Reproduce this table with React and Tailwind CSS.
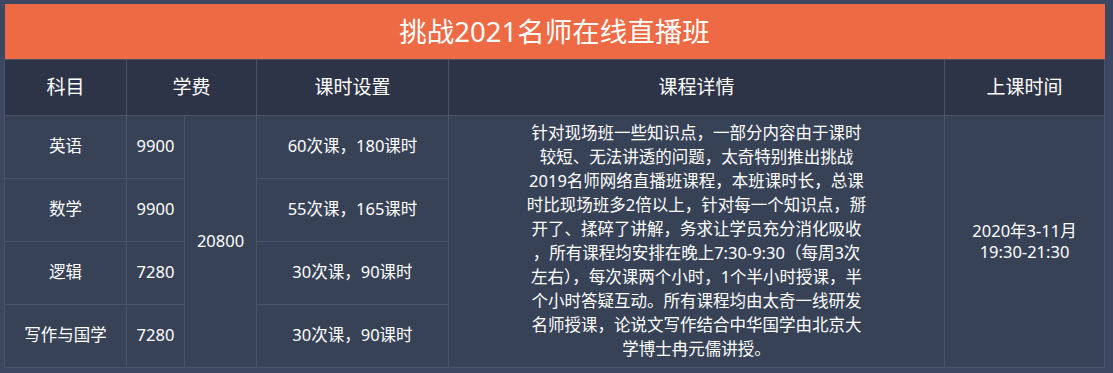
export default function App() {
  const rows = [
    { s: "英语", p: "9900", h: "60次课，180课时" },
    { s: "数学", p: "9900", h: "55次课，165课时" },
    { s: "逻辑", p: "7280", h: "30次课，90课时" },
    { s: "写作与国学", p: "7280", h: "30次课，90课时" },
  ];
  const lines = [
    "针对现场班一些知识点，一部分内容由于课时",
    "较短、无法讲透的问题，太奇特别推出挑战",
    "2019名师网络直播班课程，本班课时长，总课",
    "时比现场班多2倍以上，针对每一个知识点，掰",
    "开了、揉碎了讲解，务求让学员充分消化吸收",
    "，所有课程均安排在晚上7:30-9:30（每周3次",
    "左右），每次课两个小时，1个半小时授课，半",
    "个小时答疑互动。所有课程均由太奇一线研发",
    "名师授课，论说文写作结合中华国学由北京大",
    "学博士冉元儒讲授。",
  ];
  const cell = "border border-[#4a5468] text-center align-middle p-0";
  return (
    <div
      className="w-[1113px] h-[373px] bg-[#3c4861] pt-[4px] pl-[4px] text-white overflow-hidden"
      style={{ fontFamily: '"Noto Sans", "Noto Sans CJK SC", sans-serif' }}
    >
      <table className="w-[1100px] table-fixed border-collapse">
        <colgroup>
          <col className="w-[122px]" />
          <col className="w-[58px]" />
          <col className="w-[72px]" />
          <col className="w-[192px]" />
          <col className="w-[496px]" />
          <col className="w-[160px]" />
        </colgroup>
        <thead>
          <tr className="h-[55px]">
            <th
              colSpan={6}
              className="bg-[#ee6a44] text-[27.5px] font-normal text-center align-middle p-0 border-b border-[#4a5468]"
            >
              挑战2021名师在线直播班
            </th>
          </tr>
          <tr className="h-[56px] bg-[#2e3447] text-[19px]">
            <th className={cell + " font-normal"}>科目</th>
            <th colSpan={2} className={cell + " font-normal"}>
              学费
            </th>
            <th className={cell + " font-normal"}>课时设置</th>
            <th className={cell + " font-normal"}>课程详情</th>
            <th className={cell + " font-normal"}>上课时间</th>
          </tr>
        </thead>
        <tbody className="bg-[#384257] text-[16.5px]">
          {rows.map((r, i) => (
            <tr key={i} className="h-[63px]">
              <td className={cell}>{r.s}</td>
              <td className={cell}>{r.p}</td>
              {i === 0 && (
                <td rowSpan={4} className={cell}>
                  20800
                </td>
              )}
              <td className={cell}>{r.h}</td>
              {i === 0 && (
                <td rowSpan={4} className={cell + " leading-[24px]"}>
                  {lines.map((l, k) => (
                    <div key={k} className="whitespace-nowrap">
                      {l}
                    </div>
                  ))}
                </td>
              )}
              {i === 0 && (
                <td rowSpan={4} className={cell + " leading-[21px]"}>
                  <div>2020年3-11月</div>
                  <div>19:30-21:30</div>
                </td>
              )}
            </tr>
          ))}
        </tbody>
      </table>
    </div>
  );
}
